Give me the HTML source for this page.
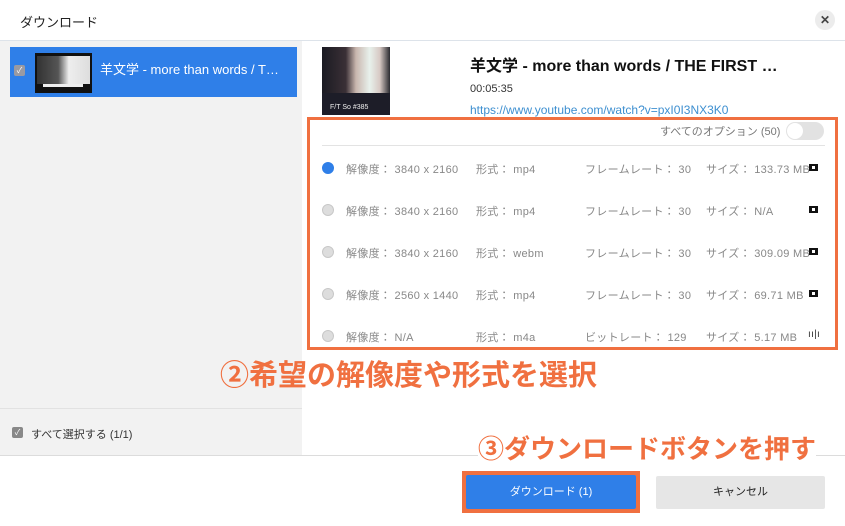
<!DOCTYPE html>
<html><head><meta charset="utf-8"><style>
*{margin:0;padding:0;box-sizing:border-box}
body{width:845px;height:526px;background:#fff;font-family:"Liberation Sans","Noto Sans CJK JP",sans-serif;position:relative;overflow:hidden;color:#333}
.a{position:absolute}
.row{position:absolute;left:322px;width:500px;height:20px;font-size:11px;color:#888;letter-spacing:0.3px}
.row span{position:absolute;top:0;white-space:nowrap}
.rd{position:absolute;left:0;top:1px;width:12px;height:12px;border-radius:50%;background:#ddd;border:1px solid #c8c8c8}
.ic{position:absolute;left:487px;top:3px;width:9px;height:7px;background:#111}
.ic:after{content:"";position:absolute;left:3px;top:2px;width:3px;height:3px;background:#fff}
</style></head><body>
<div class="a" style="left:20px;top:12px;font-size:13px;color:#222">ダウンロード</div>
<div class="a" style="left:815px;top:10px;width:20px;height:20px;border-radius:50%;background:#ececec;text-align:center;line-height:20px;font-size:12px;font-weight:bold;color:#444">✕</div>
<div class="a" style="left:0;top:40px;width:845px;height:1px;background:#dde3ea"></div>
<div class="a" style="left:0;top:41px;width:302px;height:414px;background:#f2f2f2"></div>
<div class="a" style="left:0;top:408px;width:302px;height:1px;background:#e2e2e2"></div>
<div class="a" style="left:10px;top:47px;width:287px;height:50px;background:#2f7fe8"></div>
<div class="a" style="left:14px;top:65px;width:11px;height:11px;border-radius:2px;background:#9a9aa2;color:#fff;font-size:8px;text-align:center;line-height:11px">✓</div>
<div class="a" style="left:35px;top:53px;width:57px;height:40px;background:#111"><div style="position:absolute;left:2px;top:3px;width:53px;height:28px;background:linear-gradient(90deg,#333 0,#555 40%,#eee 60%,#ddd 100%)"></div><div style="position:absolute;left:8px;top:31px;width:40px;height:3px;background:#eee"></div></div>
<div class="a" style="left:100px;top:59px;font-size:13px;color:#fff">羊文学 - more than words / T…</div>
<div class="a" style="left:322px;top:47px;width:68px;height:68px;background:linear-gradient(90deg,#1a1a22 0,#3a3036 35%,#c9b6ae 50%,#e8f1ec 70%,#d7c9c4 85%,#2a2a30 100%)"><div style="position:absolute;left:0;bottom:0;width:68px;height:22px;background:#1d1d28"></div><div style="position:absolute;left:8px;bottom:4px;font-size:7px;color:#eee">F/T So   #385</div></div>
<div class="a" style="left:470px;top:52px;font-size:16px;font-weight:bold;color:#111">羊文学 - more than words / THE FIRST …</div>
<div class="a" style="left:470px;top:83px;font-size:11px;color:#333">00:05:35</div>
<div class="a" style="left:470px;top:103px;font-size:12px;color:#3d8fd0">https://www.youtube.com/watch?v=pxI0I3NX3K0</div>
<div class="a" style="left:307px;top:117px;width:531px;height:233px;border:3px solid #f07040"></div>
<div class="a" style="left:660px;top:123px;font-size:11px;color:#777">すべてのオプション (50)</div>
<div class="a" style="left:786px;top:122px;width:38px;height:18px;border-radius:9px;background:#e2e2e2"><div style="position:absolute;left:1px;top:1px;width:16px;height:16px;border-radius:50%;background:#fff"></div></div>
<div class="a" style="left:322px;top:145px;width:503px;height:1px;background:#e3e3e3"></div>

<div class="row" style="top:161px"><div class="rd" style="background:#2f7fe8;border-color:#2f7fe8"></div><span style="left:24px">解像度： 3840 x 2160</span><span style="left:154px">形式： mp4</span><span style="left:263px">フレームレート： 30</span><span style="left:384px">サイズ： 133.73 MB</span><div class="ic"></div></div>
<div class="row" style="top:203px"><div class="rd"></div><span style="left:24px">解像度： 3840 x 2160</span><span style="left:154px">形式： mp4</span><span style="left:263px">フレームレート： 30</span><span style="left:384px">サイズ： N/A</span><div class="ic"></div></div>
<div class="row" style="top:245px"><div class="rd"></div><span style="left:24px">解像度： 3840 x 2160</span><span style="left:154px">形式： webm</span><span style="left:263px">フレームレート： 30</span><span style="left:384px">サイズ： 309.09 MB</span><div class="ic"></div></div>
<div class="row" style="top:287px"><div class="rd"></div><span style="left:24px">解像度： 2560 x 1440</span><span style="left:154px">形式： mp4</span><span style="left:263px">フレームレート： 30</span><span style="left:384px">サイズ： 69.71 MB</span><div class="ic"></div></div>
<div class="row" style="top:329px"><div class="rd"></div><span style="left:24px">解像度： N/A</span><span style="left:154px">形式： m4a</span><span style="left:263px">ビットレート： 129</span><span style="left:384px">サイズ： 5.17 MB</span><span style="left:486px;font-size:10px;color:#333">ıı|ı</span></div>

<div class="a" style="left:220px;top:357px;font-size:29px;font-weight:bold;color:#f07040;white-space:nowrap;line-height:38px">②希望の解像度や形式を選択</div>
<div class="a" style="left:12px;top:427px;width:11px;height:11px;border-radius:2px;background:#888;color:#fff;font-size:8px;text-align:center;line-height:11px">✓</div>
<div class="a" style="left:31px;top:426px;font-size:11px;color:#333">すべて選択する (1/1)</div>
<div class="a" style="left:0;top:455px;width:845px;height:1px;background:#dcdcdc"></div>
<div class="a" style="left:478px;top:432px;font-size:26px;font-weight:bold;color:#f07040;white-space:nowrap;background:#fff;line-height:34px">③ダウンロードボタンを押す</div>
<div class="a" style="left:462px;top:471px;width:178px;height:42px;background:#f07040"></div>
<div class="a" style="left:466px;top:475px;width:170px;height:34px;background:#2f7fe8;border-radius:2px;color:#fff;font-size:11px;text-align:center;line-height:34px">ダウンロード (1)</div>
<div class="a" style="left:656px;top:476px;width:169px;height:33px;background:#e6e6e6;border-radius:2px;color:#222;font-size:11px;text-align:center;line-height:33px">キャンセル</div>
</body></html>
